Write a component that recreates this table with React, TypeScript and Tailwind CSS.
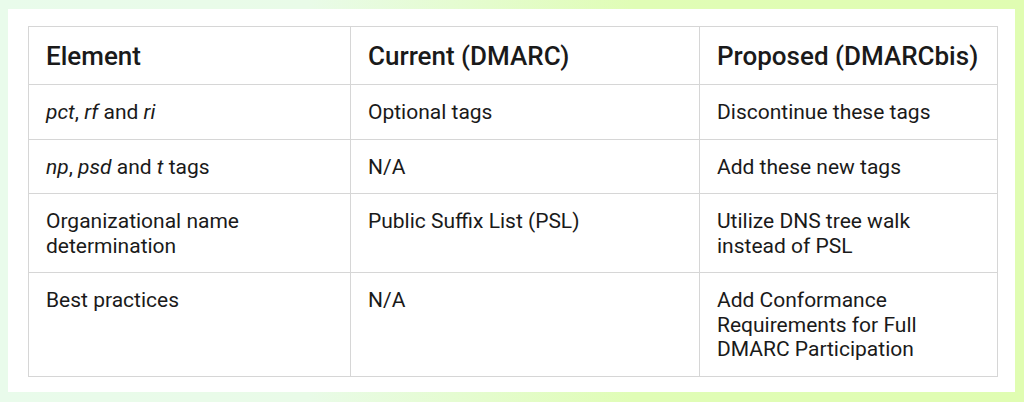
// Dependencies - React
import React from 'react';

// Types
interface RowProperties {
    element: React.ReactNode;
    current: React.ReactNode;
    proposed: React.ReactNode;
}

// Data - comparison rows
const rows: RowProperties[] = [
    {
        element: (
            <>
                <i>pct</i>, <i>rf</i> and <i>ri</i>
            </>
        ),
        current: 'Optional tags',
        proposed: 'Discontinue these tags',
    },
    {
        element: (
            <>
                <i>np</i>, <i>psd</i> and <i>t</i> tags
            </>
        ),
        current: 'N/A',
        proposed: 'Add these new tags',
    },
    {
        element: (
            <>
                Organizational name
                <br />
                determination
            </>
        ),
        current: 'Public Suffix List (PSL)',
        proposed: (
            <>
                Utilize DNS tree walk
                <br />
                instead of PSL
            </>
        ),
    },
    {
        element: 'Best practices',
        current: 'N/A',
        proposed: (
            <>
                Add Conformance
                <br />
                Requirements for Full
                <br />
                DMARC Participation
            </>
        ),
    },
];

const headerCellClassName = 'border border-[#d6d6d6] px-[17px] pt-[15px] pb-[14px] text-left align-top text-[26px] leading-[28px] font-medium';
const bodyCellClassName = 'border border-[#d6d6d6] px-[17px] pt-[15px] pb-[14px] align-top text-[21px] leading-[24.5px] font-normal';

// Component - App
export default function App() {
    // Render the component
    return (
        <div className="h-[402px] w-[1024px] bg-[linear-gradient(90deg,#e9fbeb_0%,#e9fbe8_30%,#e0fdb6_62%,#e0fdb2_100%)] pt-[9px] pl-[8px] font-['Roboto',sans-serif] text-[#1a1a1a]">
            {/* Card */}
            <div className="h-[383px] w-[1007px] bg-white pt-[17px] pl-[20px]">
                <table className="w-[969px] table-fixed border-collapse">
                    <colgroup>
                        <col className="w-[322px]" />
                        <col className="w-[349px]" />
                        <col className="w-[298px]" />
                    </colgroup>
                    <thead>
                        <tr>
                            <th className={headerCellClassName}>Element</th>
                            <th className={headerCellClassName}>Current (DMARC)</th>
                            <th className={headerCellClassName}>Proposed (DMARCbis)</th>
                        </tr>
                    </thead>
                    <tbody>
                        {rows.map(function (row, index) {
                            return (
                                <tr key={index}>
                                    <td className={bodyCellClassName}>{row.element}</td>
                                    <td className={bodyCellClassName}>{row.current}</td>
                                    <td className={bodyCellClassName}>{row.proposed}</td>
                                </tr>
                            );
                        })}
                    </tbody>
                </table>
            </div>
        </div>
    );
}
